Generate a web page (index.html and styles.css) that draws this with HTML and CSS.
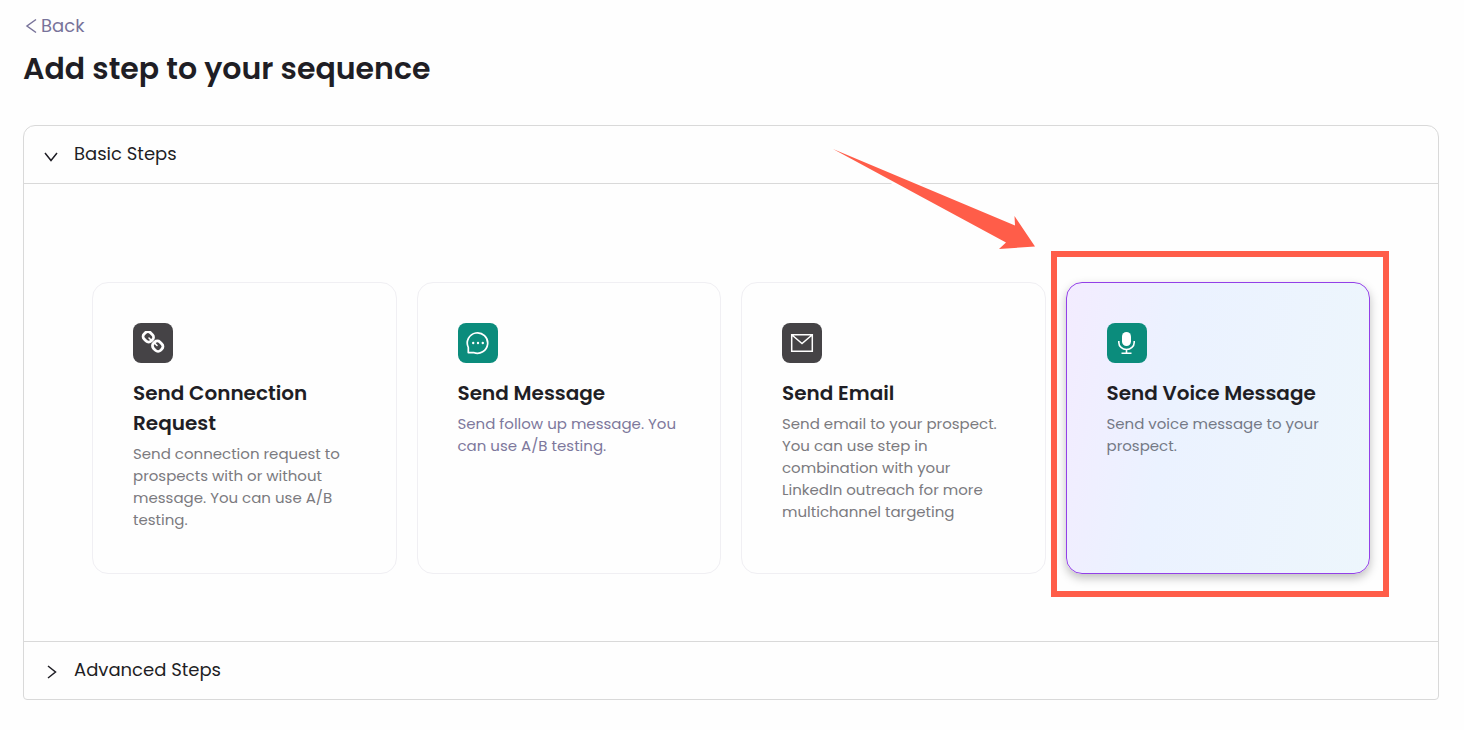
FILE: index.html
```html
<!DOCTYPE html>
<html lang="en">

<head>
    <meta charset="UTF-8">
    <meta name="viewport" content="width=device-width, initial-scale=1.0">
    <title>Add step to your sequence</title>
    <link rel="stylesheet" href="styles.css">
</head>

<body>
    <main class="page">

        <a href="#" class="back">
            <svg width="12" height="16" viewBox="0 0 12 16">
                <path d="M11 1.500L2 8l9 6.500" />
            </svg>
            Back
        </a>
        <h1>Add step to your sequence</h1>

        <section class="accordion">
            <details open>
                <summary>
                    <svg class="chevron" width="14" height="14" viewBox="0 0 14 14">
                        <path d="M4 1l7.500 6L4 13" />
                    </svg>
                    Basic Steps
                </summary>

                <div class="steps">
                    <div class="step">
                        <button type="button" class="card">
                            <span class="icon dark">
                                <svg width="24" height="24" viewBox="0 0 24 24" fill="none" stroke="#fff" stroke-width="2.800">
                                    <rect x="2.300" y="1.400" width="10" height="9" rx="3.600" transform="rotate(45 7.300 5.900)" />
                                    <rect x="11.700" y="10.700" width="10" height="9" rx="3.600" transform="rotate(45 16.700 15.200)" />
                                    <path d="M8 7l2 2M14 12.500l2 2" stroke-width="1.600" stroke-linecap="round" />
                                </svg>
                            </span>
                            <span class="title">Send Connection Request</span>
                            <span class="text">Send connection request to prospects with or without message. You can use A/B testing.</span>
                        </button>
                    </div>

                    <div class="step">
                        <button type="button" class="card">
                            <span class="icon green">
                                <svg width="24" height="24" viewBox="0 0 24 24" fill="none" stroke="#fff" stroke-width="1.700">
                                    <path d="M2.300 21.700V16.500A10.200 10.200 0 1 1 7.600 21.500z" stroke-linejoin="round" />
                                    <g fill="#fff" stroke="none">
                                        <circle cx="7.200" cy="12" r="1.200" />
                                        <circle cx="12" cy="12" r="1.200" />
                                        <circle cx="16.800" cy="12" r="1.200" />
                                    </g>
                                </svg>
                            </span>
                            <span class="title">Send Message</span>
                            <span class="text violet">Send follow up message. You can use A/B testing.</span>
                        </button>
                    </div>

                    <div class="step">
                        <button type="button" class="card">
                            <span class="icon dark">
                                <svg width="24" height="24" viewBox="0 0 24 24" fill="none" stroke="#fff" stroke-width="1.500">
                                    <path d="M1.700 3.700h20.600v16.600H1.700zM2 4l10 8.500L22 4" />
                                </svg>
                            </span>
                            <span class="title">Send Email</span>
                            <span class="text">Send email to your prospect. You can use step in combination with your LinkedIn outreach for more multichannel targeting</span>
                        </button>
                    </div>

                    <div class="step">
                        <button type="button" class="card active">
                            <span class="icon green">
                                <svg width="24" height="24" viewBox="0 0 24 24" fill="none" stroke="#fff" stroke-width="1.600">
                                    <rect x="7" y="1" width="9" height="14" rx="4.500" fill="#fff" stroke="none" />
                                    <path d="M3.800 10v1.500a7.700 7 0 0 0 15.400 0V10M11.500 18.500V22M6.500 22.200h10" />
                                </svg>
                            </span>
                            <span class="title">Send Voice Message</span>
                            <span class="text">Send voice message to your prospect.</span>
                        </button>

                        <!-- pointer and frame drawn over the chosen step -->
                        <span class="frame"></span>
                        <svg class="arrow" width="202" height="102" viewBox="0 0 202 102">
                            <path d="M0 0L182 76.500 181.500 67 202 97.500 166 100 173 93.500z" />
                        </svg>
                    </div>
                </div>
            </details>

            <details>
                <summary>
                    <svg class="chevron" width="14" height="14" viewBox="0 0 14 14">
                        <path d="M4 1l7.500 6L4 13" />
                    </svg>
                    Advanced Steps
                </summary>
            </details>
        </section>

    </main>
</body>

</html>
```

FILE: styles.css
```css
* {
    box-sizing: border-box;
}

body {
    margin: 0;
    background-color: #fefefe;
    color: #1f1e25;
    font-family: Poppins, Inter, sans-serif;
}

.page {
    padding: 14px 25px 28px 23px;
}

.back {
    display: inline-flex;
    align-items: center;
    gap: 4px;
    padding-left: 2px;
    color: #78739a;
    font-size: 18px;
    line-height: 24px;
    text-decoration: none;
}

.back svg,
.chevron {
    fill: none;
    stroke: currentColor;
    stroke-width: 1.5;
}

h1 {
    margin: 6px 0 34px;
    font-size: 30px;
    font-weight: 600;
    line-height: 44px;
}

.accordion {
    border: 1px solid #d9d9d9;
    border-radius: 12px 12px 4px 4px;
}

details + details {
    border-top: 1px solid #d9d9d9;
}

summary {
    display: flex;
    align-items: center;
    gap: 16px;
    padding: 16px 20px 17px;
    font-size: 18px;
    line-height: 24px;
    list-style: none;
    cursor: pointer;
}

details[open] summary {
    border-bottom: 1px solid #d9d9d9;
}

.chevron {
    position: relative;
    top: 2px;
}

details[open] .chevron {
    transform: rotate(90deg);
}

.steps {
    display: grid;
    grid-template-columns: repeat(4, 1fr);
    gap: 20px;
    padding: 98px 68px 67px;
}

.step {
    position: relative;
    display: flex;
}

.card {
    display: flex;
    flex-direction: column;
    align-items: flex-start;
    width: 100%;
    min-height: 292px;
    padding: 40px;
    border: 1px solid #f0eff3;
    border-radius: 16px;
    background-color: #fefefe;
    color: inherit;
    font-family: inherit;
    text-align: left;
    cursor: pointer;
}

.card.active {
    border-color: #9340e8;
    background: linear-gradient(100deg, #f3ecff 0%, #ebf2ff 35%, #edf6fc 100%);
    box-shadow: 0 4px 10px rgb(0 0 0 / 25%);
}

.icon {
    display: flex;
    align-items: center;
    justify-content: center;
    width: 40px;
    height: 40px;
    margin-bottom: 15px;
    border-radius: 8px;
}

.icon.dark {
    background-color: #454346;
}

.icon.green {
    background-color: #0b8c7c;
}

.title {
    margin-bottom: 5px;
    font-size: 20px;
    font-weight: 600;
    line-height: 30px;
}

.text {
    color: #7b7a7f;
    font-size: 15px;
    line-height: 22px;
}

.text.violet {
    color: #7d789c;
}

.active .text {
    color: #747986;
}

.frame {
    position: absolute;
    top: -31px;
    right: -19px;
    bottom: -23px;
    left: -15px;
    border: 6px solid #ff5d49;
    pointer-events: none;
}

.arrow {
    position: absolute;
    top: -133px;
    left: -233px;
    overflow: visible;
    fill: #ff5d49;
    stroke: #fefefe;
    stroke-width: 5;
    paint-order: stroke;
    pointer-events: none;
}
```
